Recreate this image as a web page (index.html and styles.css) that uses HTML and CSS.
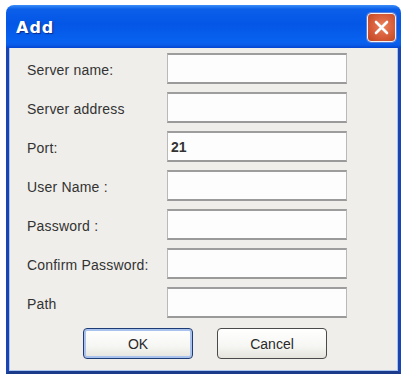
FILE: index.html
```html
<!DOCTYPE html>
<html>
<head>
<meta charset="utf-8">
<link rel="stylesheet" href="styles.css">
</head>
<body>
<div class="window">
  <div class="titlebar">
    <span class="title">Add</span>
    <button class="close" aria-label="Close">
      <svg width="17" height="17" viewBox="0 0 17 17"><path d="M3 3 L14 14 M14 3 L3 14" stroke="#fff" stroke-width="2.6" stroke-linecap="round"/></svg>
    </button>
  </div>
  <div class="body">
    <div class="form">
      <label>Server name:</label><div class="field"></div>
      <label>Server address</label><div class="field"></div>
      <label>Port:</label><div class="field">21</div>
      <label>User Name :</label><div class="field"></div>
      <label>Password :</label><div class="field"></div>
      <label>Confirm Password:</label><div class="field"></div>
      <label>Path</label><div class="field"></div>
    </div>
    <div class="buttons">
      <button class="btn default">OK</button>
      <button class="btn">Cancel</button>
    </div>
  </div>
</div>
</body>
</html>
```
FILE: styles.css
```css
html, body {
  margin: 0;
  padding: 0;
  background: #ffffff;
}
body {
  padding: 5px 0 0 6px;
}
.window {
  width: 395px;
  height: 369px;
  display: flex;
  flex-direction: column;
  border-radius: 8px 8px 0 0;
  overflow: hidden;
  font-family: "Liberation Sans", Arial, sans-serif;
}
.titlebar {
  height: 43px;
  flex: none;
  display: flex;
  align-items: center;
  justify-content: space-between;
  padding: 0 5px 0 10px;
  background: linear-gradient(#3a8cf6 0%, #0b5fe9 10%, #0456e6 45%, #0862f0 85%, #0a5ce8 93%, #0444cf 100%);
}
.title {
  font-family: "DejaVu Sans", sans-serif;
  font-weight: bold;
  font-size: 16px;
  letter-spacing: 1px;
  color: #ffffff;
  text-shadow: 1px 1px 1px #0a2a8a;
  margin-top: 1px;
}
.close {
  width: 29px;
  height: 29px;
  padding: 0;
  margin-top: 1px;
  border: 1px solid #f4f4f4;
  border-radius: 4px;
  background: radial-gradient(circle at 55% 45%, #e9875c 0%, #dc6440 40%, #c94f2a 80%, #b44223 100%);
  display: flex;
  align-items: center;
  justify-content: center;
  box-shadow: 0 0 0 1px #5b7fd9;
}
.body {
  flex: 1;
  background: #efeeea;
  border: 3px solid #1a45b0;
  border-top: none;
  border-bottom-color: #1c3a8a;
  box-shadow: inset 1px 0 0 #a8c4f0, inset -1px 0 0 #a8c4f0, inset 0 -1px 0 #a8c4f0;
  padding: 5px 0 0 18px;
  display: flex;
  flex-direction: column;
}
.form {
  display: grid;
  grid-template-columns: 140px 180px;
  grid-auto-rows: 31px;
  row-gap: 8px;
  align-items: center;
}
label {
  font-size: 14px;
  letter-spacing: 0.2px;
  color: #333333;
  padding-top: 3px;
}
.field {
  height: 31px;
  box-sizing: border-box;
  background: #fdfdfd;
  border: 1px solid #b9b9b9;
  border-top: 2px solid #9d9d9d;
  border-bottom: 2px solid #9a9a9a;
  font-size: 14px;
  font-weight: bold;
  color: #333333;
  padding: 6px 0 0 3px;
}
.buttons {
  display: flex;
  gap: 24px;
  margin: 10px 0 0 56px;
}
.btn {
  width: 110px;
  height: 31px;
  font-family: "Liberation Sans", Arial, sans-serif;
  font-size: 14px;
  color: #2a2a2a;
  border: 1px solid #4a4a4a;
  border-radius: 4px;
  background: linear-gradient(#ffffff 0%, #f6f6f3 60%, #e4e3dc 100%);
  padding: 0;
}
.btn.default {
  border-color: #1d3b74;
  box-shadow: inset 0 0 0 2px #a9c2ee;
}
```
